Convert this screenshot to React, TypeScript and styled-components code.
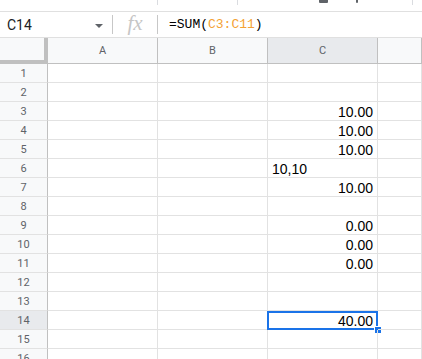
import * as React from 'react';
import styled, { createGlobalStyle } from 'styled-components';

const GlobalStyle = createGlobalStyle`
  html, body {
    margin: 0;
    padding: 0;
    background: #fff;
    overflow: hidden;
  }
  body {
    font-family: Roboto, "Liberation Sans", Arial, sans-serif;
  }
`;

const COLS = ['A', 'B', 'C'];
const ROW_COUNT = 16;

// value per row, column C only
const VALUES: Record<number, { text: string; align: 'left' | 'right' }> = {
  3: { text: '10.00', align: 'right' },
  4: { text: '10.00', align: 'right' },
  5: { text: '10.00', align: 'right' },
  6: { text: '10,10', align: 'left' },
  7: { text: '10.00', align: 'right' },
  9: { text: '0.00', align: 'right' },
  10: { text: '0.00', align: 'right' },
  11: { text: '0.00', align: 'right' },
  14: { text: '40.00', align: 'right' },
};

const SELECTED_ROW = 14;
const SELECTED_COL = 'C';

const Page = styled.div`
  width: 422px;
  height: 359px;
  overflow: hidden;
  display: flex;
  flex-direction: column;
`;

// remains of the toolbar, cut off at the top
const ToolStrip = styled.div`
  height: 11px;
  flex: 0 0 11px;
  border-bottom: 1px solid #e0e0e0;
  display: flex;
  align-items: flex-start;
`;

const ToolGap = styled.div<{ $w: number }>`
  width: ${p => p.$w}px;
  flex: 0 0 auto;
`;

const ToolSep = styled.div`
  width: 1px;
  height: 5px;
  background: #dadce0;
`;

const ToolIconStub = styled.div<{ $w: number }>`
  width: ${p => p.$w}px;
  height: 3px;
  background: #5f6368;
  border-radius: 0 0 1px 1px;
`;

const FormulaBar = styled.div`
  height: 25px;
  flex: 0 0 25px;
  display: flex;
  align-items: center;
  border-bottom: 1px solid #e0e0e0;
`;

const NameBox = styled.div`
  width: 112px;
  height: 100%;
  box-sizing: border-box;
  padding: 0 9px 0 7px;
  display: flex;
  align-items: center;
  justify-content: space-between;
  font-family: Roboto, "Liberation Sans", Arial, sans-serif;
  font-size: 14px;
  color: #202124;
`;

const Caret = styled.span`
  width: 0;
  height: 0;
  border-left: 4px solid transparent;
  border-right: 4px solid transparent;
  border-top: 4px solid #5f6368;
  margin-top: 2px;
`;

const BarDivider = styled.div`
  width: 1px;
  height: 19px;
  background: #c7c7c7;
`;

const FxBox = styled.div`
  width: 44px;
  display: flex;
  justify-content: center;
  align-items: center;
  font-family: "Liberation Serif", "DejaVu Serif", serif;
  font-style: italic;
  font-size: 21px;
  color: #c6c6c6;
  line-height: 1;
  padding-bottom: 2px;
`;

const Formula = styled.div`
  padding-left: 11px;
  font-family: "Liberation Mono", "DejaVu Sans Mono", monospace;
  font-size: 13px;
  color: #000;
  white-space: pre;
`;

const Ref = styled.span`
  color: #f4a235;
`;

const Sheet = styled.div`
  display: grid;
  grid-template-columns: 48px 110px 110px 110px 1fr;
  grid-auto-rows: 19px;
  grid-template-rows: 26px;
`;

const Corner = styled.div`
  background: #f8f9fa;
  border-right: 4px solid #c0c0c0;
  border-bottom: 4px solid #c0c0c0;
  box-sizing: border-box;
`;

const ColHeader = styled.div<{ $active?: boolean }>`
  background: ${p => (p.$active ? '#e8eaed' : '#f8f9fa')};
  border-right: 1px solid #c0c0c0;
  border-bottom: 1px solid #c0c0c0;
  box-sizing: border-box;
  display: flex;
  align-items: center;
  justify-content: center;
  font-family: Roboto, "Liberation Sans", Arial, sans-serif;
  font-size: 11px;
  color: #5f6368;
`;

const RowHeader = styled.div<{ $active?: boolean }>`
  background: ${p => (p.$active ? '#e8eaed' : '#f8f9fa')};
  border-right: 1px solid #c0c0c0;
  border-bottom: 1px solid #e2e2e2;
  box-sizing: border-box;
  display: flex;
  align-items: center;
  justify-content: center;
  font-family: Roboto, "Liberation Sans", Arial, sans-serif;
  font-size: 11px;
  color: #5f6368;
`;

const Cell = styled.div<{ $align?: 'left' | 'right' }>`
  position: relative;
  border-right: 1px solid #e2e2e2;
  border-bottom: 1px solid #e2e2e2;
  box-sizing: border-box;
  display: flex;
  align-items: flex-end;
  justify-content: ${p => (p.$align === 'left' ? 'flex-start' : 'flex-end')};
  padding: 0 4px;
  font-family: "Liberation Sans", Arial, sans-serif;
  font-size: 14px;
  line-height: 16px;
  color: #000;
  white-space: nowrap;
`;

const Selection = styled.div`
  position: absolute;
  top: 0;
  left: -1px;
  right: -1px;
  bottom: -1px;
  border: 2px solid #1a73e8;
  pointer-events: none;
`;

const FillHandle = styled.div`
  position: absolute;
  right: -5px;
  bottom: -5px;
  width: 6px;
  height: 6px;
  background: #1a73e8;
  box-shadow: 0 0 0 1px #fff;
`;

export default function App() {
  const rows = Array.from({ length: ROW_COUNT }, (_, i) => i + 1);
  return (
    <Page>
      <GlobalStyle />
      <ToolStrip>
        <ToolGap $w={157} />
        <ToolSep />
        <ToolGap $w={79} />
        <ToolSep />
        <ToolGap $w={81} />
        <ToolIconStub $w={9} />
        <ToolGap $w={28} />
        <ToolIconStub $w={2} />
        <ToolGap $w={54} />
        <ToolSep />
      </ToolStrip>
      <FormulaBar>
        <NameBox>
          C14
          <Caret />
        </NameBox>
        <BarDivider />
        <FxBox>fx</FxBox>
        <BarDivider />
        <Formula>
          =SUM(<Ref>C3:C11</Ref>)
        </Formula>
      </FormulaBar>
      <Sheet>
        <Corner />
        {COLS.map(c => (
          <ColHeader key={c} $active={c === SELECTED_COL}>
            {c}
          </ColHeader>
        ))}
        <ColHeader />
        {rows.map(r => (
          <React.Fragment key={r}>
            <RowHeader $active={r === SELECTED_ROW}>{r}</RowHeader>
            <Cell />
            <Cell />
            <Cell $align={VALUES[r]?.align}>
              {VALUES[r]?.text}
              {r === SELECTED_ROW && (
                <Selection>
                  <FillHandle />
                </Selection>
              )}
            </Cell>
            <Cell />
          </React.Fragment>
        ))}
      </Sheet>
    </Page>
  );
}
